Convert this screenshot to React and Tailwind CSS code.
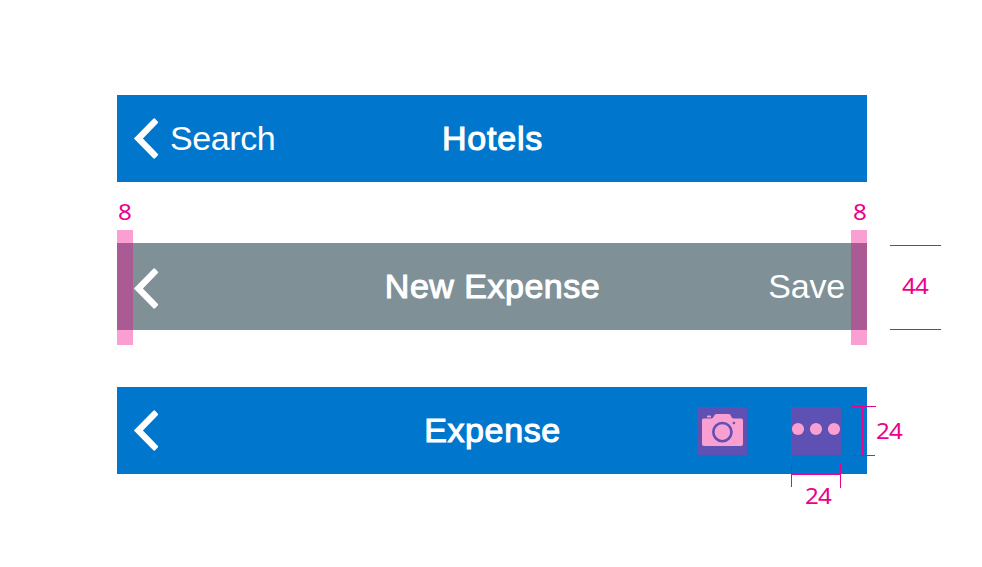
function Chevron({ className = "" }) {
  return (
    <svg className={`h-[41px] w-[26px] shrink-0 ${className}`} viewBox="0 0 26 41">
      <path d="M0.9 20.5 L20.3 0.8 Q21.2 -0.1 22.1 0.8 L24.7 3.4 Q25.6 4.3 24.7 5.2 L9.9 20.5 L24.7 35.8 Q25.6 36.7 24.7 37.6 L22.1 40.2 Q21.2 41.1 20.3 40.2 Z" fill="#fff" />
    </svg>
  );
}

function Bar({ color, title, titleClass, left, children }) {
  return (
    <div className={`grid h-[87px] w-[750px] grid-cols-[1fr_auto_1fr] items-center text-[34px] leading-[40px] text-white ${color}`}>
      <div className="flex items-center pl-4">{left}</div>
      <h2 className={`whitespace-nowrap pb-[2px] pl-px [-webkit-text-stroke:1.1px_white] ${titleClass}`}>{title}</h2>
      <div className="flex items-center justify-end">{children}</div>
    </div>
  );
}

function Margin({ side }) {
  return (
    <div className={`absolute -top-[13px] h-[115px] w-4 ${side}`}>
      <div className="h-[13px] bg-[#fa9fd1]" />
      <div className="h-[87px] bg-[#aa5b94]" />
      <div className="h-[15px] bg-[#fa9fd1]" />
    </div>
  );
}

function Label({ className, children }) {
  return (
    <span className={`absolute origin-left scale-x-110 whitespace-nowrap font-['Noto_Sans',sans-serif] text-[22px] leading-[24px] tracking-[-0.8px] text-[#ec008c] ${className}`}>
      {children}
    </span>
  );
}

function Camera() {
  return (
    <svg className="h-12 w-[50px] bg-[#5f50b3]" viewBox="0 0 50 48">
      <path d="M6.5 11.5 H14 Q16 11.5 17 9 Q17.8 7 19.5 7 H31.5 Q33.5 7 34 9 Q34.8 11.5 36.5 11.5 H44 Q46 11.5 46 13.5 V37 Q46 39 44 39 H7 Q5 39 5 37 V13 Q5 11.5 6.5 11.5 Z" fill="#fa9fd1" />
      <rect x="10" y="8.6" width="4" height="1.9" rx=".7" fill="#fa9fd1" />
      <circle cx="25.4" cy="25.1" r="9.1" fill="none" stroke="#5f50b3" strokeWidth="2.6" />
      <circle cx="36.9" cy="16" r="1.3" fill="#5f50b3" />
    </svg>
  );
}

function More() {
  return (
    <svg className="h-12 w-[50px] bg-[#5f50b3]" viewBox="0 0 50 48">
      <circle cx="7" cy="22" r="6.1" fill="#fa9fd1" />
      <circle cx="25" cy="22" r="6.1" fill="#fa9fd1" />
      <circle cx="43" cy="22" r="6.1" fill="#fa9fd1" />
    </svg>
  );
}

export default function App() {
  return (
    <main className="flex h-[567px] w-[982px] flex-col overflow-hidden bg-white pl-[117px] pt-[95px] font-['Liberation_Sans',Arial,sans-serif]">
      <Bar
        color="bg-[#0076cc]"
        title="Hotels"
        titleClass="tracking-[0.8px]"
        left={
          <>
            <Chevron />
            <span className="ml-[11px] pb-[2px] tracking-[-0.4px]">Search</span>
          </>
        }
      />

      <div className="relative mt-[61px] w-[750px]">
        <Bar color="bg-[#7f9097]" title="New Expense" titleClass="tracking-[0.5px]" left={<Chevron className="translate-y-[2px]" />}>
          <span className="pb-[2px] pr-[22px] tracking-[-0.2px]">Save</span>
        </Bar>
        <Margin side="left-0" />
        <Margin side="right-0" />
        <Label className="left-px -top-[44px]">8</Label>
        <Label className="left-[736px] -top-[44px]">8</Label>
        <div className="absolute left-[773px] top-[2px] h-[85px] w-[51px] border-y border-[#ec008c]" />
        <Label className="left-[785px] top-[30px]">44</Label>
      </div>

      <div className="relative mt-[57px] w-[750px]">
        <Bar color="bg-[#0076cc]" title="Expense" titleClass="tracking-[0.6px]" left={<Chevron />}>
          <div className="flex gap-11 pr-[26px]">
            <Camera />
            <More />
          </div>
        </Bar>
        <svg className="absolute left-[670px] top-[15px] h-[90px] w-[95px]" viewBox="0 0 95 90" fill="none" stroke="#ec008c" shapeRendering="crispEdges">
          <path d="M64 4.5 H89 M64 53.5 H88 M75.5 4 V53 M4.5 60 V85 M53.5 61 V86 M4 72.5 H54" />
        </svg>
        <Label className="left-[759px] top-[31px]">24</Label>
        <Label className="left-[688px] top-[96px]">24</Label>
      </div>
    </main>
  );
}
